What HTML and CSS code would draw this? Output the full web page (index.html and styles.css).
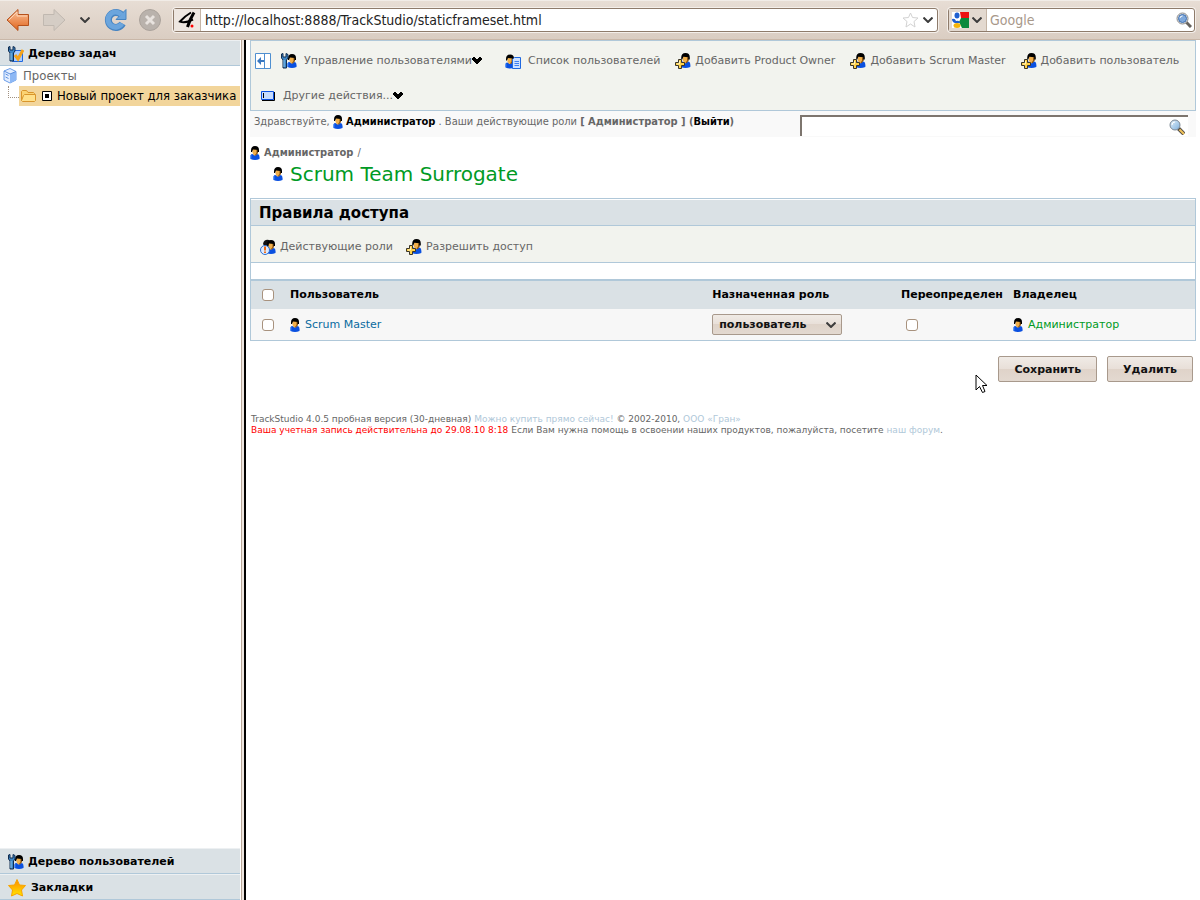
FILE: index.html
```
<!DOCTYPE html>
<html lang="ru">
<head>
  <meta charset="UTF-8" />
  <title>TrackStudio</title>
  <link rel="stylesheet" href="styles.css">
</head>
<body>
  <!-- icon sprite -->
  <svg class="sprite" aria-hidden="true">
    <defs>
      <linearGradient id="orange" x1="0" y1="0" x2="0" y2="1">
        <stop offset="0" stop-color="#fbc49c" /><stop offset="1" stop-color="#e0641c" />
      </linearGradient>
      <linearGradient id="gold" x1="0" y1="0" x2="0" y2="1">
        <stop offset="0" stop-color="#ff8a00" /><stop offset="1" stop-color="#ffe600" />
      </linearGradient>
      <linearGradient id="lens" x1="0" y1="0" x2="1" y2="1">
        <stop offset="0" stop-color="#e2f1fb" /><stop offset="1" stop-color="#7fb0dc" />
      </linearGradient>
    </defs>
    <symbol id="person" viewBox="0 0 10 14">
      <path d="M1 8.5Q0 10 .5 13Q5 15 9.500 13Q10 9 8 8L5 9L2 8Z" fill="#0a50e0" />
      <path d="M.8 9V12.500" stroke="#5b9bff" />
      <path d="M2.500 3H7.500V7L5.500 9.500H4L2.500 7Z" fill="#f2b04a" />
      <path d="M6.500 4H8V7L6 9.500L5 9L6.500 7Z" fill="#8a5210" />
      <path d="M1 4.500Q1 0 5 0Q9 0 9 4V6H7.500V4L3 3.500L2 6H1Z" fill="#000" />
    </symbol>
    <symbol id="wrench" viewBox="0 0 8 16">
      <path d="M.5 1L2 .5V4H5V.5L7 1.500V5L5.500 7V15H2V7L.5 5Z" fill="#3d86c6" stroke="#102c50" />
      <path d="M3 7V14" stroke="#8cc6ee" />
    </symbol>
    <symbol id="plus" viewBox="0 0 10 10">
      <path d="M3.500 .5H6.500V3.500H9.500V6.500H6.500V9.500H3.500V6.500H.5V3.500H3.500Z" fill="#ffd24a" stroke="#3a3528" />
      <path d="M4.500 2V5H2" stroke="#fff3c0" fill="none" />
    </symbol>
    <symbol id="i-user" viewBox="0 0 10 14"><use href="#person" width="10" height="14" /></symbol>
    <symbol id="i-manage" viewBox="0 0 16 16">
      <use href="#person" x="6" y="1" width="10" height="14" />
      <use href="#wrench" width="8" height="16" />
    </symbol>
    <symbol id="i-add" viewBox="0 0 16 16">
      <use href="#person" x="5" y="0" width="11" height="15" />
      <use href="#plus" y="6" width="10" height="10" />
    </symbol>
    <symbol id="i-list" viewBox="0 0 16 16">
      <use href="#person" y="1" width="10" height="15" />
      <path d="M9.500 4.500H15.500V15.500H7.500V6.500Z" fill="#cfe2ff" stroke="#1f68e0" />
      <path d="M9.500 8.500H14M9.500 10.500H14M9.500 12.500H14" stroke="#3f7ff0" />
    </symbol>
    <symbol id="i-roles" viewBox="0 0 16 16">
      <path d="M3 5Q4 0 9 1L12 5L8 8H5Z" fill="#111" />
      <use href="#person" x="6" y="1" width="10" height="14" />
      <circle cx="5" cy="11" r="4.500" fill="#dceaff" stroke="#2f6fd0" />
      <path d="M5 7.500V11.500M5 12.500V14" stroke="#f06a10" stroke-width="2" />
    </symbol>
    <symbol id="i-task" viewBox="0 0 16 16">
      <path d="M4.500 4.500H14.500V15.500H4.500Z" fill="#a9ccff" stroke="#1f68e0" />
      <use href="#wrench" width="8" height="16" />
      <path d="M7 9L10 13L15 4" fill="none" stroke="#f5a31a" stroke-width="3" />
    </symbol>
    <symbol id="i-glass" viewBox="0 0 16 16">
      <path d="M9.500 9.500L15 15" stroke="#55504a" stroke-width="4" />
      <path d="M10.500 10.500L15 15" stroke="#f2c45a" stroke-width="2" />
      <circle cx="6" cy="6" r="5" fill="url(#lens)" stroke="#7c8792" />
      <path d="M3 6Q3 3 6 3" stroke="#fff" fill="none" />
    </symbol>
    <symbol id="i-glass-chrome" viewBox="0 0 16 16">
      <path d="M10 10L15 15" stroke="#66625e" stroke-width="3" />
      <circle cx="6.500" cy="6.500" r="5.500" fill="#e6e6e6" stroke="#8a8a8a" />
      <circle cx="6.500" cy="6.500" r="4" fill="#7fa9dc" stroke="#3f6fb0" />
      <path d="M4 6Q4 4 6.500 4" stroke="#fff" fill="none" />
    </symbol>
    <symbol id="i-drop" viewBox="0 0 10 8">
      <path d="M1 0H3V1H4V2H6V1H7V0H9V1H10V3H9V4H8V5H7V6H6V7H4V6H3V5H2V4H1V3H0V1H1Z" fill="#000" />
    </symbol>
    <symbol id="i-chevron" viewBox="0 0 10 6">
      <path d="M.5 .5L5 5L9.500 .5" fill="none" stroke="#3c3c3c" stroke-width="2" />
    </symbol>
  </svg>

  <header class="browser">
    <button class="nav-button" aria-label="Back">
      <svg width="24" height="24" viewBox="0 0 24 24"><path d="M1 12L12 1.500V6.500H22.500V17.500H12V22.500Z" fill="url(#orange)" stroke="#b5511c" /><path d="M3 12L11 4V8H21" fill="none" stroke="#fdd3b4" /></svg>
    </button>
    <button class="nav-button forward" aria-label="Forward">
      <svg width="24" height="24" viewBox="0 0 24 24"><path d="M23 12L12 1.500V6.500H1.500V17.500H12V22.500Z" fill="#d5cdc5" stroke="#c0b8b0" /></svg>
    </button>
    <button class="nav-button history" aria-label="History">
      <svg width="10" height="6"><use href="#i-chevron" /></svg>
    </button>
    <button class="nav-button reload" aria-label="Reload">
      <svg width="24" height="24" viewBox="0 0 24 24"><path d="M17.500 7A7.500 7.500 0 1 0 18.500 15.500" fill="none" stroke="#4684c2" stroke-width="7" /><path d="M22 1.500V11.500H12Z" fill="#6ba5dd" stroke="#4684c2" /><path d="M17.500 7A7.500 7.500 0 1 0 18 15.500" fill="none" stroke="#6ba5dd" stroke-width="5" /></svg>
    </button>
    <button class="nav-button" aria-label="Stop">
      <svg width="24" height="24" viewBox="0 0 24 24"><circle cx="12" cy="12" r="10.500" fill="#b9b2ac" stroke="#aaa29b" /><path d="M8 8L16 16M16 8L8 16" stroke="#e8e3df" stroke-width="3" /></svg>
    </button>
    <div class="address">
      <span class="site-icon">
        <svg width="18" height="18" viewBox="0 0 18 18"><path d="M13 1.500Q7 5 2 10.500Q7 12.500 15 8.500" fill="none" stroke="#000" stroke-width="2" /><path d="M16 1.500Q12 8 9.500 16" fill="none" stroke="#000" stroke-width="3" /><circle cx="14" cy="15" r="1.500" fill="#f00" /></svg>
      </span>
      <input type="text" aria-label="Address" value="http://localhost:8888/TrackStudio/staticframeset.html" />
      <svg width="17" height="16" viewBox="0 0 17 16"><path d="M8.500 1L10.500 5.500L16 6L12 9.500L13 15L8.500 12L4 15L5 9.500L1 6L6.500 5.500Z" fill="#fff" stroke="#d2d2d2" /></svg>
      <svg width="10" height="6"><use href="#i-chevron" /></svg>
    </div>
    <div class="web-search">
      <span class="engine">
        <svg width="17" height="16" viewBox="0 0 17 16"><rect width="17" height="16" fill="#fff" /><path d="M8 0H17V6H9Z" fill="#e11" /><path d="M9 6H17V16H10L7 10Z" fill="#0a8a3c" /><path d="M0 4H4L5 10H0Z" fill="#fff" /><ellipse cx="5" cy="3.500" rx="2.500" ry="3" fill="#1f5fd0" /><path d="M0 7Q3 6 4 9Q8 8 8 11H3Q0 10 0 7Z" fill="#1f5fd0" /><ellipse cx="5" cy="13.500" rx="3.500" ry="2.500" fill="#f6b40a" /></svg>
        <svg width="10" height="6"><use href="#i-chevron" /></svg>
      </span>
      <input type="text" aria-label="Google" placeholder="Google" />
      <svg width="16" height="16"><use href="#i-glass-chrome" /></svg>
    </div>
  </header>

  <div class="frames">
    <aside class="sidebar">
      <a class="panel-title" href="#"><svg width="16" height="16"><use href="#i-task" /></svg>Дерево задач</a>
      <div class="tree">
        <a class="tree-root" href="#">
          <svg width="15" height="16" viewBox="0 0 15 16"><path d="M1 3L7 .5L13 3.500V12L7 15L1 12Z" fill="#e3eeff" stroke="#6a9ce8" /><path d="M7 6V15L13 12V3.500Z" fill="#8db8f5" /><path d="M1 3L7 6L13 3.500M2.500 6L5.500 7.500M2.500 9L5.500 10.500" stroke="#5c90e0" fill="none" /></svg>
          Проекты
        </a>
        <div class="tree-line">
          <span class="branch"></span>
          <a class="tree-node" href="#">
            <svg width="16" height="14" viewBox="0 0 16 14"><path d="M.5 11.500V2.500L1.500 1.500H5.500L7 3.500H12.500L13.500 4.500V6" fill="#fbd373" stroke="#d9952b" /><path d="M3.500 5.500H14.500V11.500L13.500 12.500H1.500L.5 11.500L2.500 6.500Z" fill="#ffe08a" stroke="#d9952b" /></svg>
            <svg width="10" height="10" viewBox="0 0 10 10"><path d="M.5 .5H9.500V9.500H.5Z" fill="#fff" stroke="#000" /><path d="M3 3H7V7H3Z" /></svg>
            Новый проект для заказчика
          </a>
        </div>
      </div>
      <a class="panel-title" href="#"><svg width="16" height="16"><use href="#i-manage" /></svg>Дерево пользователей</a>
      <a class="panel-title bookmarks" href="#"><svg width="18" height="18" viewBox="0 0 18 18"><path d="M9 .5L11.500 6L17.500 6.500L13.500 11L14.500 17L9 14.500L3.500 17L4.500 11L.5 6.500L6.500 6Z" fill="url(#gold)" stroke="#f7a400" /></svg>Закладки</a>
    </aside>
    <div class="splitter"></div>

    <main class="main">
      <nav class="toolbar">
        <a class="hide-tree" href="#" aria-label="Скрыть дерево">
          <svg width="16" height="16" viewBox="0 0 16 16"><path d="M.5 .5H15.500V15.500H.5ZM9.500 0V16" fill="#fff" stroke="#4f8fd0" /><path d="M2 8L6 4V7H9V9H6V12Z" fill="#3a78c0" /></svg>
        </a>
        <a class="item menu" href="#"><svg width="16" height="16"><use href="#i-manage" /></svg><span>Управление пользователями<svg class="drop" width="10" height="8"><use href="#i-drop" /></svg></span></a>
        <a class="item menu" href="#"><svg width="16" height="16"><use href="#i-list" /></svg>Список пользователей</a>
        <a class="item" href="#"><svg width="16" height="16"><use href="#i-add" /></svg>Добавить Product Owner</a>
        <a class="item" href="#"><svg width="16" height="16"><use href="#i-add" /></svg>Добавить Scrum Master</a>
        <a class="item" href="#"><svg width="16" height="16"><use href="#i-add" /></svg>Добавить пользователь</a>
        <a class="item menu other" href="#"><svg width="15" height="10" viewBox="0 0 15 10"><path d="M.5 .5H12.500V8.500H.5Z" fill="#c5dbff" stroke="#0a50e0" /><path d="M13.500 1V9.500H1" fill="none" stroke="#000" /><path d="M2.500 2V7" stroke="#000" /></svg><span>Другие действия...<svg class="drop" width="10" height="8"><use href="#i-drop" /></svg></span></a>
      </nav>

      <div class="welcome">
        <p>Здравствуйте, <svg class="user" width="10" height="14"><use href="#i-user" /></svg> <a class="me" href="#">Администратор</a> . Ваши действующие роли <b>[ Администратор ] (<a href="#">Выйти</a>)</b></p>
        <form class="find">
          <input type="text" aria-label="Поиск" />
          <button type="button" aria-label="Найти"><svg width="16" height="16"><use href="#i-glass" /></svg></button>
        </form>
      </div>

      <div class="path"><svg width="10" height="14"><use href="#i-user" /></svg><a href="#">Администратор</a> /</div>
      <h1><svg width="10" height="14"><use href="#i-user" /></svg>Scrum Team Surrogate</h1>

      <section class="access">
        <h2>Правила доступа</h2>
        <nav class="access-bar">
          <a href="#"><svg width="16" height="16"><use href="#i-roles" /></svg>Действующие роли</a>
          <a href="#"><svg width="16" height="16"><use href="#i-add" /></svg>Разрешить доступ</a>
        </nav>
        <table>
          <thead>
            <tr>
              <th class="check"><input type="checkbox" aria-label="Выбрать все" /></th>
              <th class="name">Пользователь</th>
              <th class="role">Назначенная роль</th>
              <th class="override">Переопределен</th>
              <th>Владелец</th>
            </tr>
          </thead>
          <tbody>
            <tr>
              <td class="check"><input type="checkbox" aria-label="Scrum Master" /></td>
              <td class="name"><a class="person-link" href="#"><svg width="10" height="14"><use href="#i-user" /></svg>Scrum Master</a></td>
              <td class="role">
                <select aria-label="Назначенная роль">
                  <option>пользователь</option>
                </select>
              </td>
              <td class="override"><input type="checkbox" aria-label="Переопределен" /></td>
              <td><a class="person-link owner" href="#"><svg width="10" height="14"><use href="#i-user" /></svg>Администратор</a></td>
            </tr>
          </tbody>
        </table>
      </section>

      <div class="actions">
        <button type="button">Сохранить</button>
        <button type="button">Удалить</button>
      </div>

      <footer>
        <div>TrackStudio 4.0.5 пробная версия (30-дневная) <a href="#">Можно купить прямо сейчас!</a> © 2002-2010, <a href="#">ООО «Гран»</a></div>
        <div><span class="expires">Ваша учетная запись действительна до 29.08.10 8:18</span> Если Вам нужна помощь в освоении наших продуктов, пожалуйста, посетите <a href="#">наш форум</a>.</div>
      </footer>
    </main>
  </div>

  <svg class="pointer" width="14" height="20" viewBox="0 0 14 20"><path d="M1 1V16L4.500 12.500L7.500 18.500L10 17.500L7.500 11.500H12Z" fill="#fff" stroke="#000" /></svg>
</body>
</html>
```

FILE: styles.css
```
:root {
  --line: #b0c8d9;
  --head: #dae1e5;
  --bar: #f2f3ee;
  --text: #666;
  --chrome-border: #8e7b6b;
}

* {
  box-sizing: border-box;
}

body {
  margin: 0;
  min-height: 100vh;
  display: flex;
  flex-direction: column;
  background: #fff;
  color: var(--text);
  font: 11px/14px "DejaVu Sans", Verdana, sans-serif;
}

a {
  color: inherit;
  text-decoration: none;
}

svg {
  flex: none;
}

input,
button,
select {
  font-family: inherit;
}

.sprite {
  position: absolute;
  width: 0;
  height: 0;
}

/* Browser bar */
.browser {
  height: 40px;
  display: flex;
  align-items: center;
  padding: 0 5px 0 6px;
  border-top: 1px solid #f1ece7;
  border-bottom: 1px solid #c9b7a8;
  background: linear-gradient(#e7ddd4, #dacdc2);
  font-family: "DejaVu Sans Condensed", "DejaVu Sans", sans-serif;
}

.nav-button {
  display: flex;
  padding: 0;
  border: 0;
  background: none;
}

.forward {
  margin-left: 12px;
}

.history {
  margin: 0 14px;
}

.reload {
  margin-right: 10px;
}

.address,
.web-search {
  height: 24px;
  display: flex;
  align-items: center;
  border: 1px solid var(--chrome-border);
  border-radius: 3px;
  background: #fff;
  box-shadow: 0 0 0 1px #f4efea;
}

.address {
  flex: 1;
  margin-left: 11px;
  padding-right: 4px;
  gap: 4px;
}

.site-icon,
.engine {
  height: 22px;
  display: flex;
  align-items: center;
  border-right: 1px solid #c5b5a6;
  background: #eee7e1;
}

.site-icon {
  padding: 0 4px;
}

.address input,
.web-search input {
  flex: 1;
  min-width: 0;
  padding: 0;
  border: 0;
  outline: none;
  background: none;
  font-size: 14px;
  color: #222;
}

.web-search {
  width: 247px;
  margin-left: 10px;
  padding-right: 2px;
}

.web-search input {
  margin-left: 3px;
}

.web-search input::placeholder {
  color: #a8988a;
  opacity: 1;
}

.engine {
  gap: 3px;
  padding: 0 4px 0 3px;
  background: #e3d9d0;
}

/* Frames */
.frames {
  flex: 1;
  display: flex;
}

.sidebar {
  width: 240px;
  display: flex;
  flex-direction: column;
}

.splitter {
  width: 6px;
  background: linear-gradient(90deg, #fff 1px, #b7a698 1px 2px, #ede5df 2px 4px, #000 4px);
}

.main {
  flex: 1;
  min-width: 0;
  padding: 0 4px;
}

.panel-title {
  height: 26px;
  display: flex;
  align-items: center;
  gap: 4px;
  padding: 2px 8px 0;
  background: var(--head);
  border-top: 1px solid #edf0f2;
  border-bottom: 1px solid var(--line);
  color: #000;
  font-weight: bold;
}

.bookmarks {
  gap: 5px;
}

.tree {
  flex: 1;
  font: 13px/20px "DejaVu Sans Condensed", "DejaVu Sans", sans-serif;
}

.tree-root,
.tree-node {
  height: 20px;
  display: flex;
  align-items: center;
  white-space: nowrap;
}

.tree-root {
  gap: 5px;
  padding-left: 3px;
}

.tree-line {
  display: flex;
}

.branch {
  width: 11px;
  height: 12px;
  margin-left: 8px;
  border-left: 1px dotted #a09080;
  border-bottom: 1px dotted #a09080;
}

.tree-node {
  flex: 1;
  gap: 5px;
  padding-left: 2px;
  background: #f2d59b;
  color: #000;
}

/* Top menu */
.toolbar {
  display: flex;
  flex-wrap: wrap;
  align-items: center;
  gap: 7px 15px;
  padding: 6px 4px 0;
  border: 1px solid var(--line);
  background: var(--bar);
}

.toolbar a {
  height: 28px;
  display: flex;
  align-items: center;
  gap: 4px;
}

.toolbar .menu {
  gap: 7px;
}

.toolbar .hide-tree {
  margin-right: -5px;
}

.toolbar .menu + .menu {
  margin-left: 8px;
}

.toolbar .other {
  margin-left: 6px;
}

.drop {
  vertical-align: -1px;
}

.welcome {
  height: 26px;
  display: flex;
  justify-content: space-between;
  padding: 4px 8px 0 4px;
  background: #f9f9f9;
  font-family: "DejaVu Sans Condensed", "DejaVu Sans", sans-serif;
}

.welcome p {
  margin: 0;
}

.welcome a {
  color: #000;
  font-weight: bold;
}

.user {
  vertical-align: -4px;
}

.find {
  width: 388px;
  height: 21px;
  display: flex;
  align-items: center;
  border: solid #7d756e;
  border-width: 2px 0 0 2px;
  background: #fff;
}

.find input {
  flex: 1;
  min-width: 0;
  height: 16px;
  padding: 0 2px;
  border: 0;
  outline: none;
}

.find button {
  display: flex;
  padding: 0 3px;
  border: 0;
  background: none;
}

.path {
  display: flex;
  align-items: center;
  gap: 4px;
  margin-top: 9px;
  font-family: "DejaVu Sans Condensed", "DejaVu Sans", sans-serif;
}

.path a {
  font-weight: bold;
}

h1 {
  display: flex;
  align-items: center;
  gap: 7px;
  margin: 2px 0 12px;
  padding-left: 23px;
  color: #009a24;
  font-size: 20px;
  line-height: 24px;
  font-weight: normal;
}

/* Access rules */
.access {
  border: 1px solid var(--line);
}

h2 {
  margin: 0;
  padding: 1px 8px 0;
  background: var(--head);
  border-top: 1px solid #fff;
  border-bottom: 1px solid var(--line);
  color: #000;
  font-size: 15px;
  line-height: 24px;
}

.access-bar {
  display: flex;
  gap: 13px;
  padding: 13px 9px 7px;
  border-bottom: 1px solid var(--line);
  background: var(--bar);
}

.access-bar a {
  display: flex;
  align-items: center;
  gap: 4px;
}

table {
  width: 100%;
  margin-top: 16px;
  border-top: 2px solid var(--line);
  border-collapse: separate;
  border-spacing: 0;
}

th,
td {
  padding: 0;
  text-align: left;
}

th {
  height: 28px;
  background: var(--head);
  color: #000;
}

td {
  height: 31px;
  background: #f7f7f7;
}

.check {
  width: 39px;
  padding-left: 11px;
}

.role {
  width: 20%;
}

th.override,
td.override {
  width: 112px;
}

td.override {
  padding-left: 5px;
}

th:last-child,
td:last-child {
  width: 182px;
}

input[type="checkbox"] {
  appearance: none;
  display: block;
  width: 12px;
  height: 12px;
  margin: 0;
  border: 1px solid #a8927e;
  border-radius: 3px;
  background: #fff;
}

.person-link {
  display: flex;
  align-items: center;
  gap: 5px;
  color: #0a6ba0;
}

.owner {
  color: #009a24;
}

select,
.actions button {
  border: 1px solid #a8998c;
  border-radius: 2px;
  background: linear-gradient(#f0ebe6, #e8dfd8 50%, #dfd3c9 50%, #e3d9d0);
  color: #111;
  font-size: 11px;
  font-weight: bold;
}

select {
  appearance: none;
  display: block;
  width: 130px;
  height: 21px;
  padding: 0 6px;
  /* chevron over the button gradient */
  background:
    url("data:image/svg+xml,%3Csvg xmlns='http://www.w3.org/2000/svg' width='10' height='6'%3E%3Cpath d='M.5 .5L5 5L9.5 .5' fill='none' stroke='%233c3c3c' stroke-width='2'/%3E%3C/svg%3E") no-repeat right 5px center,
    linear-gradient(#f0ebe6, #e8dfd8 50%, #dfd3c9 50%, #e3d9d0);
}

.actions {
  display: flex;
  justify-content: flex-end;
  gap: 10px;
  padding: 15px 3px 0;
}

.actions button {
  height: 26px;
  padding: 0 15px;
}

footer {
  margin-top: 32px;
  padding-left: 1px;
  font-size: 9px;
  line-height: 11px;
}

footer a {
  color: #b0c8d9;
}

.expires {
  color: #f00;
}

.pointer {
  position: absolute;
  left: 975px;
  top: 374px;
}
```
